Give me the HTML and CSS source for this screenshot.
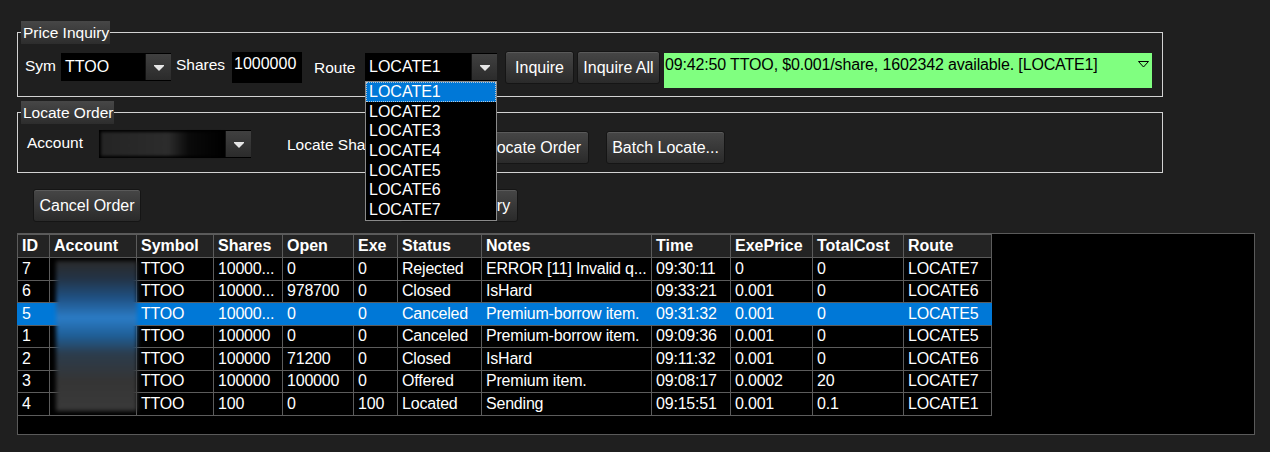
FILE: index.html
```html
<!DOCTYPE html>
<html>
  <head>
    <title>Locate Manager</title>

    <!-- Stylesheets -->
    <link rel="stylesheet" href="styles.css">
  </head>

  <body>
    <div class="window">
      <fieldset class="group">
        <legend>Price Inquiry</legend>
        <div class="row inquiry-row">
          <span class="label lbl-sym">Sym</span>
          <div class="combo combo-sym">
            <span class="combo-text">TTOO</span>
            <span class="combo-btn"><svg width="10" height="6" viewBox="0 0 10 6"><polygon points="0,0 10,0 10,1 5,6 0,1" fill="#e6e6e6"/></svg></span>
          </div>
          <span class="label lbl-shares">Shares</span>
          <div class="textbox shares-box">1000000</div>
          <span class="label lbl-route">Route</span>
          <div class="combo combo-route">
            <span class="combo-text">LOCATE1</span>
            <span class="combo-btn"><svg width="10" height="6" viewBox="0 0 10 6"><polygon points="0,0 10,0 10,1 5,6 0,1" fill="#e6e6e6"/></svg></span>
            <ul class="dropdown">
              <li class="selected">LOCATE1</li>
              <li>LOCATE2</li>
              <li>LOCATE3</li>
              <li>LOCATE4</li>
              <li>LOCATE5</li>
              <li>LOCATE6</li>
              <li>LOCATE7</li>
            </ul>
          </div>
          <button class="btn btn-inquire">Inquire</button>
          <button class="btn btn-inquire-all">Inquire All</button>
          <div class="result">
            <span>09:42:50 TTOO, $0.001/share, 1602342 available. [LOCATE1]</span>
            <svg class="result-arrow" width="11" height="7" viewBox="0 0 11 7"><polygon points="0.5,0.5 10.5,0.5 5.5,6" fill="none" stroke="#000" stroke-width="1"/></svg>
          </div>
        </div>
      </fieldset>

      <fieldset class="group">
        <legend>Locate Order</legend>
        <div class="row locate-row">
          <span class="label lbl-account">Account</span>
          <div class="combo combo-account">
            <span class="combo-text blurred"></span>
            <span class="combo-btn"><svg width="10" height="6" viewBox="0 0 10 6"><polygon points="0,0 10,0 10,1 5,6 0,1" fill="#e6e6e6"/></svg></span>
          </div>
          <span class="label lbl-locate-shares">Locate Shares</span>
          <div class="textbox locate-box"></div>
          <button class="btn btn-locate">Locate Order</button>
          <button class="btn btn-batch">Batch Locate...</button>
        </div>
      </fieldset>

      <div class="row actions">
        <button class="btn btn-cancel">Cancel Order</button>
        <button class="btn btn-history">Locate History</button>
      </div>

      <div class="grid-panel">
        <table class="grid">
          <colgroup>
            <col style="width:32px"><col style="width:87px"><col style="width:77px"><col style="width:69px">
            <col style="width:71px"><col style="width:44px"><col style="width:84px"><col style="width:170px">
            <col style="width:79px"><col style="width:82px"><col style="width:91px"><col style="width:88px">
          </colgroup>
          <thead>
            <tr><th>ID</th><th>Account</th><th>Symbol</th><th>Shares</th><th>Open</th><th>Exe</th><th>Status</th><th>Notes</th><th>Time</th><th>ExePrice</th><th>TotalCost</th><th>Route</th></tr>
          </thead>
          <tbody>
            <tr><td>7</td><td></td><td>TTOO</td><td>10000...</td><td>0</td><td>0</td><td>Rejected</td><td>ERROR [11] Invalid q...</td><td>09:30:11</td><td>0</td><td>0</td><td>LOCATE7</td></tr>
            <tr><td>6</td><td></td><td>TTOO</td><td>10000...</td><td>978700</td><td>0</td><td>Closed</td><td>IsHard</td><td>09:33:21</td><td>0.001</td><td>0</td><td>LOCATE6</td></tr>
            <tr class="selected"><td>5</td><td></td><td>TTOO</td><td>10000...</td><td>0</td><td>0</td><td>Canceled</td><td>Premium-borrow item.</td><td>09:31:32</td><td>0.001</td><td>0</td><td>LOCATE5</td></tr>
            <tr><td>1</td><td></td><td>TTOO</td><td>100000</td><td>0</td><td>0</td><td>Canceled</td><td>Premium-borrow item.</td><td>09:09:36</td><td>0.001</td><td>0</td><td>LOCATE5</td></tr>
            <tr><td>2</td><td></td><td>TTOO</td><td>100000</td><td>71200</td><td>0</td><td>Closed</td><td>IsHard</td><td>09:11:32</td><td>0.001</td><td>0</td><td>LOCATE6</td></tr>
            <tr><td>3</td><td></td><td>TTOO</td><td>100000</td><td>100000</td><td>0</td><td>Offered</td><td>Premium item.</td><td>09:08:17</td><td>0.0002</td><td>20</td><td>LOCATE7</td></tr>
            <tr><td>4</td><td></td><td>TTOO</td><td>100</td><td>0</td><td>100</td><td>Located</td><td>Sending</td><td>09:15:51</td><td>0.001</td><td>0.1</td><td>LOCATE1</td></tr>
          </tbody>
        </table>
        <!-- account names are masked in the capture -->
        <div class="account-mask"></div>
      </div>
    </div>
  </body>
</html>
```

FILE: styles.css
```css
* {
  box-sizing: border-box;
  margin: 0;
}
body {
  background: #1f1f1f;
  color: #fff;
  font-family: "Liberation Sans", Arial, sans-serif;
  font-size: 16px;
}
.window {
  width: 1270px;
  height: 452px;
  padding: 21px 0 0 17px;
  overflow: hidden;
}
.group {
  width: 1146px;
  min-width: 0;
  padding: 0;
  border: 1px solid #d2d2d2;
}
.group + .group {
  margin-top: 4px;
}
.group legend {
  margin-left: 3px;
  padding: 0 1px 0 2px;
  height: 23px;
  line-height: 23px;
  font-size: 15.5px;
  background: linear-gradient(#474747, #2d2d2d);
}
.row {
  display: flex;
  align-items: flex-start;
}
.label {
  font-size: 15.5px;
  line-height: 20px;
  white-space: nowrap;
}

/* price inquiry */
.inquiry-row {
  height: 52px;
  padding: 7px 0 8px 7px;
}
.lbl-sym {
  width: 36px;
  margin-top: 5px;
}
.lbl-shares {
  width: 61px;
  padding-left: 5px;
  margin-top: 4px;
}
.lbl-route {
  width: 63px;
  padding-left: 12px;
  margin-top: 7px;
}
.combo {
  display: flex;
  height: 28px;
  margin-top: 2px;
  background: #000;
  position: relative;
}
.combo-text {
  flex: 1;
  padding-left: 4px;
  line-height: 28px;
  white-space: nowrap;
}
.combo-btn {
  width: 26px;
  margin: 1px 0;
  display: flex;
  align-items: center;
  justify-content: center;
  padding-top: 2px;
  background: linear-gradient(#404040, #2b2b2b);
  border-left: 1px solid #111;
}
.combo-sym {
  width: 110px;
}
.combo-route {
  width: 132px;
}
.textbox {
  background: #000;
  line-height: 18px;
  padding: 3px 2px 0 2px;
}
.shares-box {
  width: 70px;
  height: 31px;
  margin-top: 1px;
}
.dropdown {
  position: absolute;
  top: 28px;
  left: 0;
  width: 132px;
  padding: 0;
  list-style: none;
  background: #000;
  border: 1px solid #8a8a8a;
  z-index: 10;
}
.dropdown li {
  height: 19.7px;
  line-height: 19.7px;
  padding-left: 3px;
}
.dropdown li.selected {
  background: #0078d7;
  outline: 1px dotted #b8c8d8;
  outline-offset: -1px;
}
.btn {
  height: 33px;
  padding: 0;
  color: #fff;
  font-family: "Liberation Sans", Arial, sans-serif;
  font-size: 16px;
  background: linear-gradient(#464646, #2a2a2a);
  border: 1px solid #151515;
  border-radius: 3px;
  box-shadow: inset 0 1px #5a5a5a;
  white-space: nowrap;
}
.btn-inquire {
  width: 69px;
  margin-left: 8px;
}
.btn-inquire-all {
  width: 83px;
  margin-left: 3px;
}
.result {
  width: 488px;
  height: 35px;
  margin: 2px 0 0 4px;
  padding: 3px 0 0 1px;
  display: flex;
  justify-content: space-between;
  line-height: 18px;
  letter-spacing: -0.15px;
  color: #000;
  background: #80ff80;
}
.result-arrow {
  margin: 5px 3px 0 0;
}

/* locate order */
.locate-row {
  height: 48px;
  padding: 6px 0 8px 9px;
}
.lbl-account {
  width: 72px;
  margin-top: 3px;
}
.combo-account {
  width: 152px;
  margin-top: 0;
}
.blurred {
  margin: 2px;
  background: linear-gradient(90deg, #242424 0%, #2c2c2c 55%, #0a0a0a 72%, #000 100%);
  filter: blur(1.5px);
}
.lbl-locate-shares {
  width: 100px;
  margin: 5px 0 0 36px;
}
.locate-box {
  width: 84px;
  height: 28px;
}
.btn-locate {
  width: 109px;
  margin: 1px 0 0 9px;
}
.btn-batch {
  width: 119px;
  margin: 1px 0 0 17px;
}

/* order actions */
.actions {
  margin-top: 16px;
  padding-left: 16px;
}
.btn-cancel {
  width: 108px;
}
.btn-history {
  width: 118px;
  margin-left: 259px;
}

/* order grid */
.grid-panel {
  position: relative;
  width: 1238px;
  height: 202px;
  margin-top: 11px;
  background: #000;
  border: 1px solid #5a5a5a;
}
.grid {
  width: 975px;
  margin-left: -1px;
  table-layout: fixed;
  border-collapse: collapse;
  font-size: 16px;
}
.grid th,
.grid td {
  padding: 0 4px;
  border: 1px solid #5c5c5c;
  text-align: left;
  white-space: nowrap;
  overflow: hidden;
}
.grid th {
  height: 23px;
  background: #232323;
  font-weight: bold;
}
.grid td {
  height: 22.5px;
  letter-spacing: -0.2px;
}
.grid tr.selected td {
  background: #0078d7;
  border-left-color: #0078d7;
  border-right-color: #0078d7;
}
.account-mask {
  position: absolute;
  left: 38px;
  top: 27px;
  width: 81px;
  height: 150px;
  background: linear-gradient(#2b2b2b 0%, #233447 12%, #1f4f80 24%, #2b7cc6 38%, #1f5e96 50%, #2c3c4c 62%, #353535 80%, #3a3a3a 100%);
  filter: blur(2px);
}
```
